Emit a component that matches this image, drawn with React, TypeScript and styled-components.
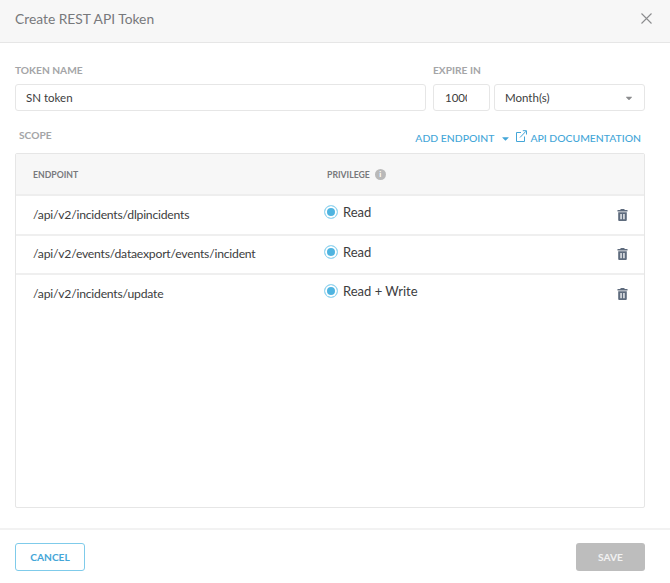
import styled, { createGlobalStyle } from "styled-components";
import { FaCaretDown } from "react-icons/fa";

const GlobalStyle = createGlobalStyle`
  html, body {
    margin: 0;
    padding: 0;
    background: #fff;
    font-family: Lato, "Liberation Sans", sans-serif;
  }
  * {
    box-sizing: border-box;
  }
`;

const Modal = styled.div`
  display: flex;
  flex-direction: column;
  width: 670px;
  height: 583px;
  overflow: hidden;
`;

const Header = styled.div`
  display: flex;
  justify-content: space-between;
  align-items: center;
  flex: none;
  height: 43px;
  padding: 0 18px 6px 15px;
  background: #f7f7f7;
  border-bottom: 1px solid #e6e6e6;
`;

const Title = styled.h2`
  margin: 0;
  font-size: 13.8px;
  font-weight: 400;
  color: #77797c;
`;

const CloseButton = styled.button`
  display: flex;
  margin-top: 1px;
  padding: 0;
  border: 0;
  background: none;
`;

const Body = styled.div`
  display: flex;
  flex: 1;
  flex-direction: column;
  padding: 20px 25px 20px 15px;
`;

const FormRow = styled.div`
  display: flex;
  gap: 7px;
`;

const Field = styled.div<{ $grow?: boolean }>`
  display: flex;
  flex-direction: column;
  ${({ $grow }) => ($grow ? "flex: 1;" : "width: 212px;")}
`;

const Label = styled.label`
  height: 21px;
  font-size: 10.2px;
  font-weight: 700;
  line-height: 14px;
  color: #a4a5a7;
`;

const Input = styled.input<{ $short?: boolean }>`
  width: ${({ $short }) => ($short ? "57px" : "100%")};
  height: 27px;
  padding: ${({ $short }) => ($short ? "0 22px 0 11px" : "0 10px")};
  border: 1px solid #e6e6e6;
  border-radius: 3px;
  outline: none;
  font-family: inherit;
  font-size: 11.5px;
  color: #3c3d40;
`;

const ExpireRow = styled.div`
  display: flex;
  gap: 4px;
`;

const Select = styled.div`
  display: flex;
  flex: 1;
  justify-content: space-between;
  align-items: center;
  height: 27px;
  padding: 0 10px;
  border: 1px solid #e6e6e6;
  border-radius: 3px;
  font-size: 11.5px;
  color: #3c3d40;
`;

const ScopeRow = styled.div`
  display: flex;
  justify-content: space-between;
  flex: none;
  height: 42px;
  padding: 17px 4px 0 4px;
`;

const Actions = styled.div`
  display: flex;
  align-items: flex-start;
  height: 16px;
  margin-top: 2px;
  font-size: 10.4px;
  font-weight: 500;
  color: #44a6d8;
`;

const ActionLink = styled.a<{ $gap: number }>`
  display: flex;
  align-items: center;
  gap: ${({ $gap }) => $gap}px;
  line-height: 16px;
`;

const AddLink = styled(ActionLink)`
  margin-right: 5px;
`;

const LinkIcon = styled.svg`
  margin-bottom: 4px;
`;

const Table = styled.div`
  display: flex;
  flex: 1;
  flex-direction: column;
  border: 1px solid #e6e6e6;
  border-radius: 2px;
`;

const TableHead = styled.div`
  display: grid;
  grid-template-columns: 294px 1fr;
  align-items: center;
  flex: none;
  height: 42px;
  padding-left: 17px;
  background: #f7f7f7;
  border-bottom: 2px solid #eeeeee;
  font-size: 8.7px;
  font-weight: 700;
  color: #77797c;
`;

const HeadCell = styled.div`
  display: flex;
  align-items: center;
  gap: 5px;
`;

const InfoIcon = styled.span`
  display: flex;
  justify-content: center;
  align-items: center;
  width: 11px;
  height: 11px;
  border-radius: 50%;
  background: #b9b9b9;
  font-size: 8px;
  color: #fff;
`;

const Row = styled.div`
  display: grid;
  grid-template-columns: 294px 1fr auto;
  align-items: center;
  flex: none;
  height: 39.5px;
  padding: 0 16px 0 17px;
  border-bottom: 2px solid #efefef;

  &:last-child {
    border-bottom-color: transparent;
  }
`;

const Endpoint = styled.div`
  margin-bottom: 1px;
  font-size: 12.2px;
  letter-spacing: -0.22px;
  color: #3c3d40;
`;

const Privilege = styled.div`
  display: flex;
  align-items: center;
  gap: 5px;
  margin: 0 0 5px -3px;
  font-size: 13px;
  color: #3c3d40;
`;

const Radio = styled.span`
  width: 14px;
  height: 14px;
  border: 1px solid #9cd9f2;
  border-radius: 50%;
  background: #4fb4e0;
  box-shadow: inset 0 0 0 2px #fff;
`;

const DeleteButton = styled.button`
  display: flex;
  padding: 0;
  border: 0;
  background: none;
`;

const Footer = styled.div`
  display: flex;
  justify-content: space-between;
  align-items: flex-start;
  flex: none;
  height: 55px;
  padding: 13px 25px 0 15px;
  border-top: 2px solid #f2f2f2;
`;

const CancelButton = styled.button`
  width: 70px;
  height: 28px;
  padding: 0;
  border: 1px solid #7fcbea;
  border-radius: 3px;
  background: #fff;
  font-family: inherit;
  font-size: 10.2px;
  font-weight: 700;
  color: #44a6d8;
`;

const SaveButton = styled.button`
  width: 69px;
  height: 28px;
  padding: 0;
  border: 0;
  border-radius: 3px;
  background: #bdbdbd;
  font-family: inherit;
  font-size: 10.2px;
  font-weight: 700;
  color: #f1f1f1;
`;

const rows = [
  { endpoint: "/api/v2/incidents/dlpincidents", privilege: "Read" },
  { endpoint: "/api/v2/events/dataexport/events/incident", privilege: "Read" },
  { endpoint: "/api/v2/incidents/update", privilege: "Read + Write" },
];

const TrashIcon = () => (
  <svg width="11" height="12" viewBox="0 0 11 12" fill="#5e6b7d">
    <path d="M3.5 0H7.5V1H10.5V2.4H0.5V1H3.5Z" />
    <path
      fillRule="evenodd"
      d="M1.2 3.2H9.8V11a1 1 0 0 1-1 1H2.2a1 1 0 0 1-1-1ZM3.4 5V10.2H4.7V5ZM6.3 5V10.2H7.6V5Z"
    />
  </svg>
);

const App: React.FC = () => {
  return (
    <Modal>
      <GlobalStyle />
      <Header>
        <Title>Create REST API Token</Title>
        <CloseButton>
          <svg width="11" height="11" viewBox="0 0 11 11" fill="none" stroke="#8b8c8e" strokeWidth="1.1">
            <path d="M0.5 0.5 10.5 10.5M10.5 0.5 0.5 10.5" />
          </svg>
        </CloseButton>
      </Header>
      <Body>
        <FormRow>
          <Field $grow>
            <Label>TOKEN NAME</Label>
            <Input defaultValue="SN token" />
          </Field>
          <Field>
            <Label>EXPIRE IN</Label>
            <ExpireRow>
              <Input $short defaultValue="1000" />
              <Select>
                Month(s)
                <FaCaretDown size={10} color="#8b8c8e" />
              </Select>
            </ExpireRow>
          </Field>
        </FormRow>
        <ScopeRow>
          <Label>SCOPE</Label>
          <Actions>
            <AddLink $gap={6}>
              ADD ENDPOINT
              <FaCaretDown size={11} />
            </AddLink>
            <ActionLink $gap={3}>
              <LinkIcon width="11" height="12" viewBox="0 0 11 12" fill="none" stroke="#44a6d8" strokeWidth="1">
                <path d="M8.5 6.5V11.5H0.5V2.5H5M4 7.5 10 1.2M6.8 0.7H10.5V4.5" />
              </LinkIcon>
              API DOCUMENTATION
            </ActionLink>
          </Actions>
        </ScopeRow>
        <Table>
          <TableHead>
            <HeadCell>ENDPOINT</HeadCell>
            <HeadCell>
              PRIVILEGE
              <InfoIcon>i</InfoIcon>
            </HeadCell>
          </TableHead>
          {rows.map((row) => (
            <Row key={row.endpoint}>
              <Endpoint>{row.endpoint}</Endpoint>
              <Privilege>
                <Radio />
                {row.privilege}
              </Privilege>
              <DeleteButton>
                <TrashIcon />
              </DeleteButton>
            </Row>
          ))}
        </Table>
      </Body>
      <Footer>
        <CancelButton>CANCEL</CancelButton>
        <SaveButton>SAVE</SaveButton>
      </Footer>
    </Modal>
  );
};

export default App;
